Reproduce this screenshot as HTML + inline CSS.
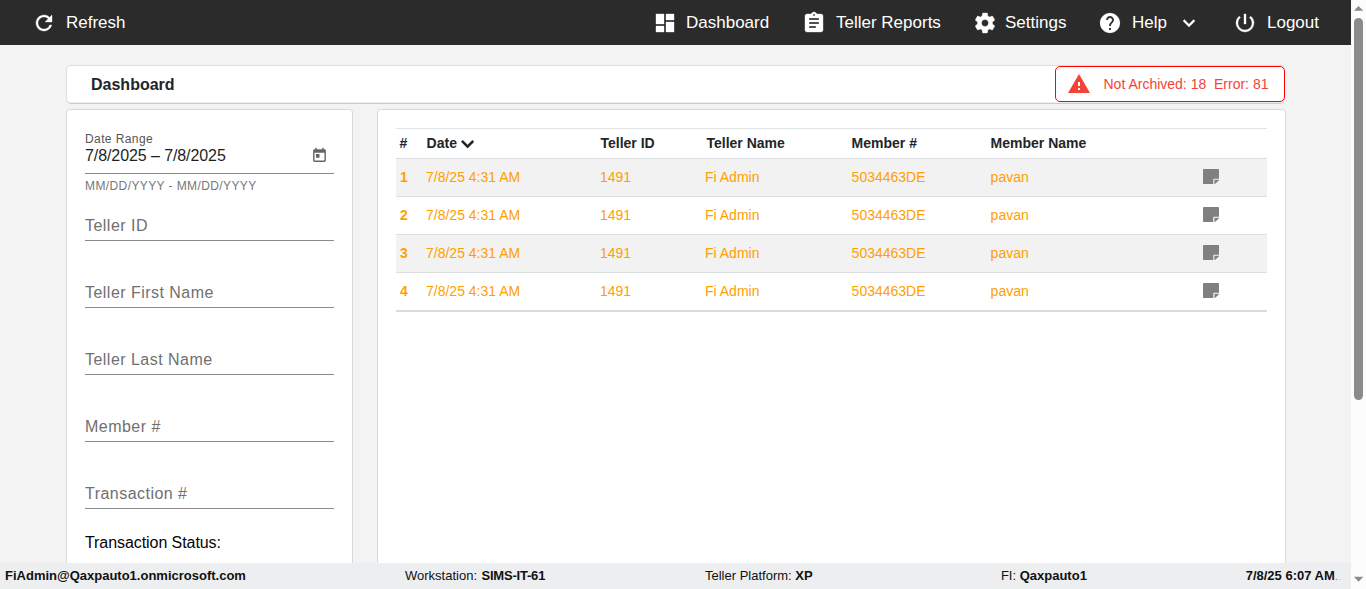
<!DOCTYPE html>
<html lang="en">
<head>
<meta charset="utf-8">
<title>Dashboard</title>
<style>
*{box-sizing:border-box;margin:0;padding:0}
html,body{width:1366px;height:589px;overflow:hidden;background:#f3f3f3;font-family:"Liberation Sans",Arial,sans-serif;color:#000}
body{position:relative}
.abs{position:absolute}
/* navbar */
#nav{left:0;top:0;width:1351px;height:45px;background:#2b2b2b;color:#fff;font-size:17px}
#nav .it{position:absolute;top:1px;height:44px;line-height:44px;white-space:nowrap}
#nav svg{position:absolute;fill:#fff;stroke:#fff;stroke-width:.35px}
/* scrollbar */
#sb{left:1351px;top:0;width:15px;height:589px;background:#fcfcfc}
#sb .th{position:absolute;left:3px;top:18px;width:9px;height:382px;border-radius:5px;background:#8b8b8b}
#sb .up{position:absolute;left:3px;top:6px;width:0;height:0;border-left:4.5px solid transparent;border-right:4.5px solid transparent;border-bottom:5px solid #8b8b8b}
#sb .dn{position:absolute;left:3px;top:577px;width:0;height:0;border-left:4.5px solid transparent;border-right:4.5px solid transparent;border-top:5px solid #8b8b8b}
/* cards */
.card{background:#fff;border:1px solid #dedede;border-radius:5px}
#title{left:66px;top:65px;width:1219px;height:39px;border-bottom-color:#cbcbcb;box-shadow:inset 0 -1px 0 #f0f0f0}
#title h1{position:absolute;left:24px;top:0;line-height:37px;font-size:16px;font-weight:bold;color:#212529}
#alert{left:1055px;top:66px;width:230px;height:36px;border:1px solid #ff0000;border-radius:5px;background:#fff;color:#f44336;font-size:14px;line-height:34px}
#alert span{position:absolute;left:47.500px;top:0;white-space:pre}
#alert svg{position:absolute;left:12.300px;top:7px}
#left{left:66px;top:109px;width:287px;height:470px;border-radius:3.500px 3.500px 0 0;border-color:#d9d9d9}
#right{left:377px;top:109px;width:909px;height:470px;border-radius:3.500px 3.500px 0 0;border-color:#d9d9d9}
/* form */
.fl{position:absolute;left:18px;color:#707070;font-size:16px;letter-spacing:.47px;white-space:nowrap}
.ul{position:absolute;left:18px;width:249px;height:1px;background:#8a8a8a}
.sm{font-size:12px;letter-spacing:.4px}
/* table */
#tbl{position:absolute;left:18px;top:18px;width:871px;border-collapse:collapse;font-size:14px;table-layout:fixed}
#tbl th{height:30px;text-align:left;font-weight:bold;color:#212529;border-top:1px solid #e2e5e8;padding:0 0 2px 4px;white-space:nowrap}
#tbl td{height:38px;color:#ffa000;border-top:1px solid #dcdfe2;padding:0 0 2px 4px;white-space:nowrap}
#tbl tr.odd td{background:#f2f2f2}
#tbl tr:last-child td{border-bottom:2px solid #d9dcdf;padding-bottom:0}
#tbl td.n{font-weight:bold}
#tbl td svg{display:block;fill:#808080;margin-left:.2px;position:relative;top:.45px}
#tbl tr:last-child td svg{top:-.55px}
/* footer */
#foot{left:0;top:563px;width:1351px;height:26px;background:#edeef0;font-size:13px;line-height:25px;color:#111}
#foot span{position:absolute;top:0;white-space:nowrap}
#foot b{font-weight:bold}
</style>
</head>
<body>
<div id="nav" class="abs">
  <svg style="left:32px;top:11px" width="24" height="24" viewBox="0 0 24 24"><path d="M17.65 6.35A7.958 7.958 0 0 0 12 4c-4.42 0-7.99 3.58-7.99 8s3.57 8 7.99 8c3.73 0 6.84-2.55 7.73-6h-2.08A5.99 5.99 0 0 1 12 18c-3.31 0-6-2.69-6-6s2.690-6 6-6c1.660 0 3.140.69 4.220 1.780L13 11h7V4l-2.350 2.350z"/></svg>
  <div class="it" style="left:66px">Refresh</div>

  <svg style="left:652.800px;top:11px" width="24" height="24" viewBox="0 0 24 24"><path d="M3 13h8V3H3v10zm0 8h8v-6H3v6zm10 0h8V11h-8v10zm0-18v6h8V3h-8z"/></svg>
  <div class="it" style="left:686px">Dashboard</div>

  <svg style="left:802px;top:11px" width="24" height="24" viewBox="0 0 24 24"><path d="M19 3h-4.180C14.400 1.840 13.300 1 12 1s-2.400.84-2.820 2H5c-1.100 0-2 .9-2 2v14c0 1.100.9 2 2 2h14c1.100 0 2-.9 2-2V5c0-1.100-.9-2-2-2zm-7 0c.55 0 1 .45 1 1s-.45 1-1 1-1-.45-1-1 .45-1 1-1zm2 14H7v-2h7v2zm3-4H7v-2h10v2zm0-4H7V7h10v2z"/></svg>
  <div class="it" style="left:836px">Teller Reports</div>

  <svg style="left:972.500px;top:11px" width="24" height="24" viewBox="0 0 24 24"><path d="M19.430 12.980c.040-.320.070-.640.070-.980s-.030-.660-.070-.980l2.110-1.650c.19-.15.240-.42.120-.640l-2-3.460c-.12-.22-.39-.3-.61-.22l-2.490 1c-.52-.4-1.080-.73-1.690-.98l-.38-2.650C14.460 2.180 14.250 2 14 2h-4c-.25 0-.46.180-.49.420l-.38 2.650c-.61.250-1.170.590-1.690.980l-2.490-1c-.23-.090-.49 0-.61.220l-2 3.460c-.13.220-.07.490.12.640l2.110 1.650c-.04.320-.07.650-.07.980s.03.660.07.980l-2.110 1.650c-.19.150-.24.420-.12.640l2 3.460c.12.220.39.300.61.220l2.490-1c.52.400 1.080.730 1.690.980l.38 2.650c.03.240.24.420.49.420h4c.25 0 .46-.18.490-.42l.38-2.650c.61-.25 1.170-.59 1.690-.98l2.490 1c.23.090.49 0 .61-.22l2-3.460c.12-.22.070-.49-.12-.64l-2.110-1.650zM12 15.500c-1.930 0-3.500-1.570-3.500-3.500s1.570-3.500 3.500-3.500 3.500 1.570 3.500 3.500-1.570 3.500-3.500 3.500z"/></svg>
  <div class="it" style="left:1005px">Settings</div>

  <svg style="left:1098px;top:11px;stroke-width:.1px" width="24" height="24" viewBox="0 0 24 24"><path d="M12 2C6.480 2 2 6.480 2 12s4.480 10 10 10 10-4.480 10-10S17.520 2 12 2zm1 17h-2v-2h2v2zm2.070-7.750l-.9.920C13.450 12.900 13 13.500 13 15h-2v-.5c0-1.100.45-2.100 1.170-2.830l1.240-1.260c.37-.36.590-.86.590-1.410 0-1.100-.9-2-2-2s-2 .9-2 2H8c0-2.210 1.790-4 4-4s4 1.790 4 4c0 .88-.36 1.680-.93 2.250z"/></svg>
  <div class="it" style="left:1132px">Help</div>
  <svg style="left:1177px;top:10.500px" width="24" height="24" viewBox="0 0 24 24"><path d="M7.410 8.590L12 13.170l4.590-4.580L18 10l-6 6-6-6 1.410-1.410z"/></svg>

  <svg style="left:1233.400px;top:11px" width="24" height="24" viewBox="0 0 24 24"><path d="M13 3h-2v10h2V3zm4.830 2.170l-1.420 1.420A6.920 6.920 0 0 1 19 12c0 3.870-3.130 7-7 7s-7-3.130-7-7c0-2.190 1.010-4.140 2.580-5.420L6.170 5.170A8.932 8.932 0 0 0 3 12a9 9 0 0 0 18 0c0-2.740-1.230-5.180-3.170-6.830z"/></svg>
  <div class="it" style="left:1267px">Logout</div>
</div>

<div id="title" class="abs card"><h1>Dashboard</h1></div>
<div id="alert" class="abs">
  <svg width="22" height="19" viewBox="0 0 22 19"><path fill="#f44336" d="M0 19h22L11 0 0 19zm12-3h-2v-2h2v2zm0-4h-2V8h2v4z"/></svg>
  <span>Not Archived: 18  Error: 81</span>
</div>

<div id="left" class="abs card">
  <div class="fl sm" style="top:22px;color:#555">Date Range</div>
  <div class="fl" style="top:37px;color:#1f1f1f;letter-spacing:-.085px">7/8/2025 – 7/8/2025</div>
  <svg class="abs" style="left:244px;top:37px" width="17" height="17" viewBox="0 0 24 24"><path fill="#666" d="M19 3h-1V1h-2v2H8V1H6v2H5c-1.110 0-1.990.9-1.990 2L3 19a2 2 0 0 0 2 2h14c1.100 0 2-.9 2-2V5c0-1.100-.9-2-2-2zm0 16H5V8h14v11zM7 10h5v5H7z"/></svg>
  <div class="ul" style="top:63px"></div>
  <div class="fl sm" style="top:69px;color:#777">MM/DD/YYYY - MM/DD/YYYY</div>

  <div class="fl" style="top:107px">Teller ID</div>
  <div class="ul" style="top:130px"></div>
  <div class="fl" style="top:174px">Teller First Name</div>
  <div class="ul" style="top:197px"></div>
  <div class="fl" style="top:241px">Teller Last Name</div>
  <div class="ul" style="top:264px"></div>
  <div class="fl" style="top:308px">Member #</div>
  <div class="ul" style="top:331px"></div>
  <div class="fl" style="top:375px">Transaction #</div>
  <div class="ul" style="top:398px"></div>
  <div class="fl" style="top:424px;color:#050505;letter-spacing:-.07px">Transaction Status:</div>
</div>

<div id="right" class="abs card">
  <table id="tbl">
    <colgroup><col style="width:26px"><col style="width:174px"><col style="width:105px"><col style="width:146.600px"><col style="width:139px"><col style="width:212.400px"><col style="width:68px"></colgroup>
    <thead><tr><th style="padding-left:3.400px">#</th><th style="padding-left:4.600px">Date <svg width="13.200" height="8.400" viewBox="0 0 13.200 8.400" style="vertical-align:-.5px;margin-left:-.1px"><path d="M.92.920L6.600 6.600l5.680-5.680" stroke="#212529" stroke-width="2.600" fill="none"/></svg></th><th style="padding-left:4.500px">Teller ID</th><th style="padding-left:5.500px">Teller Name</th><th>Member #</th><th>Member Name</th><th></th></tr></thead>
    <tbody>
      <tr class="odd"><td class="n">1</td><td>7/8/25 4:31 AM</td><td>1491</td><td>Fi Admin</td><td>5034463DE</td><td>pavan</td><td><svg width="16" height="15.100" viewBox="0 32 448 448" preserveAspectRatio="none"><path d="M312 320h136V56c0-13.300-10.700-24-24-24H24C10.700 32 0 42.700 0 56v400c0 13.300 10.700 24 24 24h264V344c0-13.200 10.800-24 24-24zm129 55l-98 98c-4.500 4.500-10.600 7-17 7h-6V352h128v6.100c0 6.300-2.500 12.400-7 16.900z"/></svg></td></tr>
      <tr><td class="n">2</td><td>7/8/25 4:31 AM</td><td>1491</td><td>Fi Admin</td><td>5034463DE</td><td>pavan</td><td><svg width="16" height="15.100" viewBox="0 32 448 448" preserveAspectRatio="none"><path d="M312 320h136V56c0-13.300-10.700-24-24-24H24C10.700 32 0 42.700 0 56v400c0 13.300 10.700 24 24 24h264V344c0-13.200 10.800-24 24-24zm129 55l-98 98c-4.500 4.500-10.600 7-17 7h-6V352h128v6.100c0 6.300-2.500 12.400-7 16.900z"/></svg></td></tr>
      <tr class="odd"><td class="n">3</td><td>7/8/25 4:31 AM</td><td>1491</td><td>Fi Admin</td><td>5034463DE</td><td>pavan</td><td><svg width="16" height="15.100" viewBox="0 32 448 448" preserveAspectRatio="none"><path d="M312 320h136V56c0-13.300-10.700-24-24-24H24C10.700 32 0 42.700 0 56v400c0 13.300 10.700 24 24 24h264V344c0-13.200 10.800-24 24-24zm129 55l-98 98c-4.500 4.500-10.600 7-17 7h-6V352h128v6.100c0 6.300-2.500 12.400-7 16.900z"/></svg></td></tr>
      <tr><td class="n">4</td><td>7/8/25 4:31 AM</td><td>1491</td><td>Fi Admin</td><td>5034463DE</td><td>pavan</td><td><svg width="16" height="15.100" viewBox="0 32 448 448" preserveAspectRatio="none"><path d="M312 320h136V56c0-13.300-10.700-24-24-24H24C10.700 32 0 42.700 0 56v400c0 13.300 10.700 24 24 24h264V344c0-13.200 10.800-24 24-24zm129 55l-98 98c-4.500 4.500-10.600 7-17 7h-6V352h128v6.100c0 6.300-2.500 12.400-7 16.900z"/></svg></td></tr>
    </tbody>
  </table>
</div>

<div id="foot" class="abs">
  <span style="left:5px"><b>FiAdmin@Qaxpauto1.onmicrosoft.com</b></span>
  <span style="left:405px">Workstation: <b style="letter-spacing:-.2px;margin-left:.8px">SIMS-IT-61</b></span>
  <span style="left:705px">Teller Platform: <b>XP</b></span>
  <span style="left:1000.900px">FI: <b>Qaxpauto1</b></span>
  <span style="left:1245.700px"><b>7/8/25 6:07 AM</b><i style="font-style:normal;font-size:9px;color:#3a4a8a;margin-left:.3px">.</i><i style="font-style:normal;font-size:9px;color:#c3c6cc;margin-left:.8px">.</i></span>
</div>

<div id="sb" class="abs"><svg class="abs" style="left:0;top:0" width="15" height="589" viewBox="0 0 15 589"><path fill="#8b8b8b" d="M2.900 10.800h9.400L7.600 5.900zM2.900 576.800h9.400L7.600 581.800z"/></svg><div class="th"></div></div>
</body>
</html>
